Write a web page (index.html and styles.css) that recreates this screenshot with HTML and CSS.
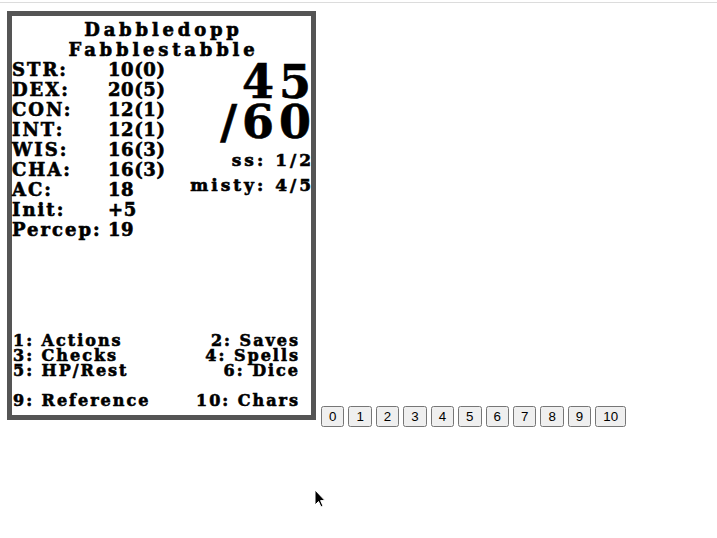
FILE: index.html
```html
<!DOCTYPE html>
<html>
<head>
<meta charset="utf-8">
<link rel="stylesheet" href="styles.css">
</head>
<body>
<div class="rule"></div>
<main class="page">
  <section class="card">
    <h1 class="name">Dabbledopp<br>Fabblestabble</h1>
    <div class="main">
      <table class="stats">
        <tr><td>STR:</td><td>10(0)</td></tr>
        <tr><td>DEX:</td><td>20(5)</td></tr>
        <tr><td>CON:</td><td>12(1)</td></tr>
        <tr><td>INT:</td><td>12(1)</td></tr>
        <tr><td>WIS:</td><td>16(3)</td></tr>
        <tr><td>CHA:</td><td>16(3)</td></tr>
        <tr><td>AC:</td><td>18</td></tr>
        <tr><td>Init:</td><td>+5</td></tr>
        <tr><td>Percep:</td><td>19</td></tr>
      </table>
      <div class="vitals">
        <div class="hp">45<br>/60</div>
        <div class="res first">ss: 1/2</div>
        <div class="res">misty: 4/5</div>
      </div>
    </div>
    <div class="menu">
      <span>1: Actions</span><span class="r">2: Saves</span>
      <span>3: Checks</span><span class="r">4: Spells</span>
      <span>5: HP/Rest</span><span class="r">6: Dice</span>
      <span class="blank"></span><span class="blank"></span>
      <span>9: Reference</span><span class="r">10: Chars</span>
    </div>
  </section>
  <div class="keys">
    <button>0</button> <button>1</button> <button>2</button> <button>3</button> <button>4</button> <button>5</button> <button>6</button> <button>7</button> <button>8</button> <button>9</button> <button>10</button>
  </div>
</main>
<svg class="cursor" width="12" height="19" viewBox="0 0 12 19"><path d="M1 1 L1 16 L4.5 12.5 L7 18 L9 17 L6.6 11.6 L11 11.6 Z" fill="#000" stroke="#fff" stroke-width="1"/></svg>
</body>
</html>
```
FILE: styles.css
```css
html, body {
  margin: 0;
  padding: 0;
  background: #fff;
}
body {
  font-family: "Times New Roman", serif;
  font-size: 16px;
}
.rule {
  margin-top: 2px;
  height: 0;
  border-top: 1px solid #dcdcdc;
}
.page {
  display: flex;
  align-items: flex-start;
  padding: 8px 0 0 7px;
}
.card {
  width: 299px;
  height: 399px;
  border: 5px solid #555;
  display: flex;
  flex-direction: column;
  font-family: "DejaVu Serif", serif;
  font-weight: bold;
  color: #000;
  letter-spacing: 2px;
  -webkit-text-stroke: 0.6px #000;
}
.name {
  margin: 4px 0 0;
  font-size: 18px;
  line-height: 20px;
  text-align: center;
  font-weight: bold;
  letter-spacing: 3.8px;
  padding-left: 4px;
}
.main {
  display: flex;
  justify-content: space-between;
  align-items: flex-start;
}
.stats {
  border-collapse: collapse;
  font-size: 18px;
  line-height: 20px;
}
.stats td {
  padding: 0;
  white-space: nowrap;
}
.stats td:first-child {
  width: 95px;
}
.stats td + td {
  letter-spacing: 0.6px;
  padding-left: 1px;
}
.vitals {
  text-align: right;
}
.hp {
  font-size: 46px;
  line-height: 40px;
  letter-spacing: 5px;
  margin-right: -5px;
  margin-top: 2px;
}
.res {
  font-size: 17px;
  line-height: 25px;
  letter-spacing: 3px;
  margin-right: -3px;
}
.res.first {
  margin-top: 6px;
}
.menu {
  margin: auto 13px 7px 1px;
  display: grid;
  grid-template-columns: 1fr 1fr;
  font-size: 16px;
  line-height: 15px;
}
.menu .r {
  text-align: right;
  margin-right: -2px;
}
.menu .blank {
  height: 15px;
}
.keys {
  margin: 395px 0 0 5px;
  white-space: nowrap;
}
.keys button {
  font-family: Arial, "Liberation Sans", sans-serif;
  font-size: 13.333px;
}
.cursor {
  position: absolute;
  left: 314px;
  top: 489px;
}
```
